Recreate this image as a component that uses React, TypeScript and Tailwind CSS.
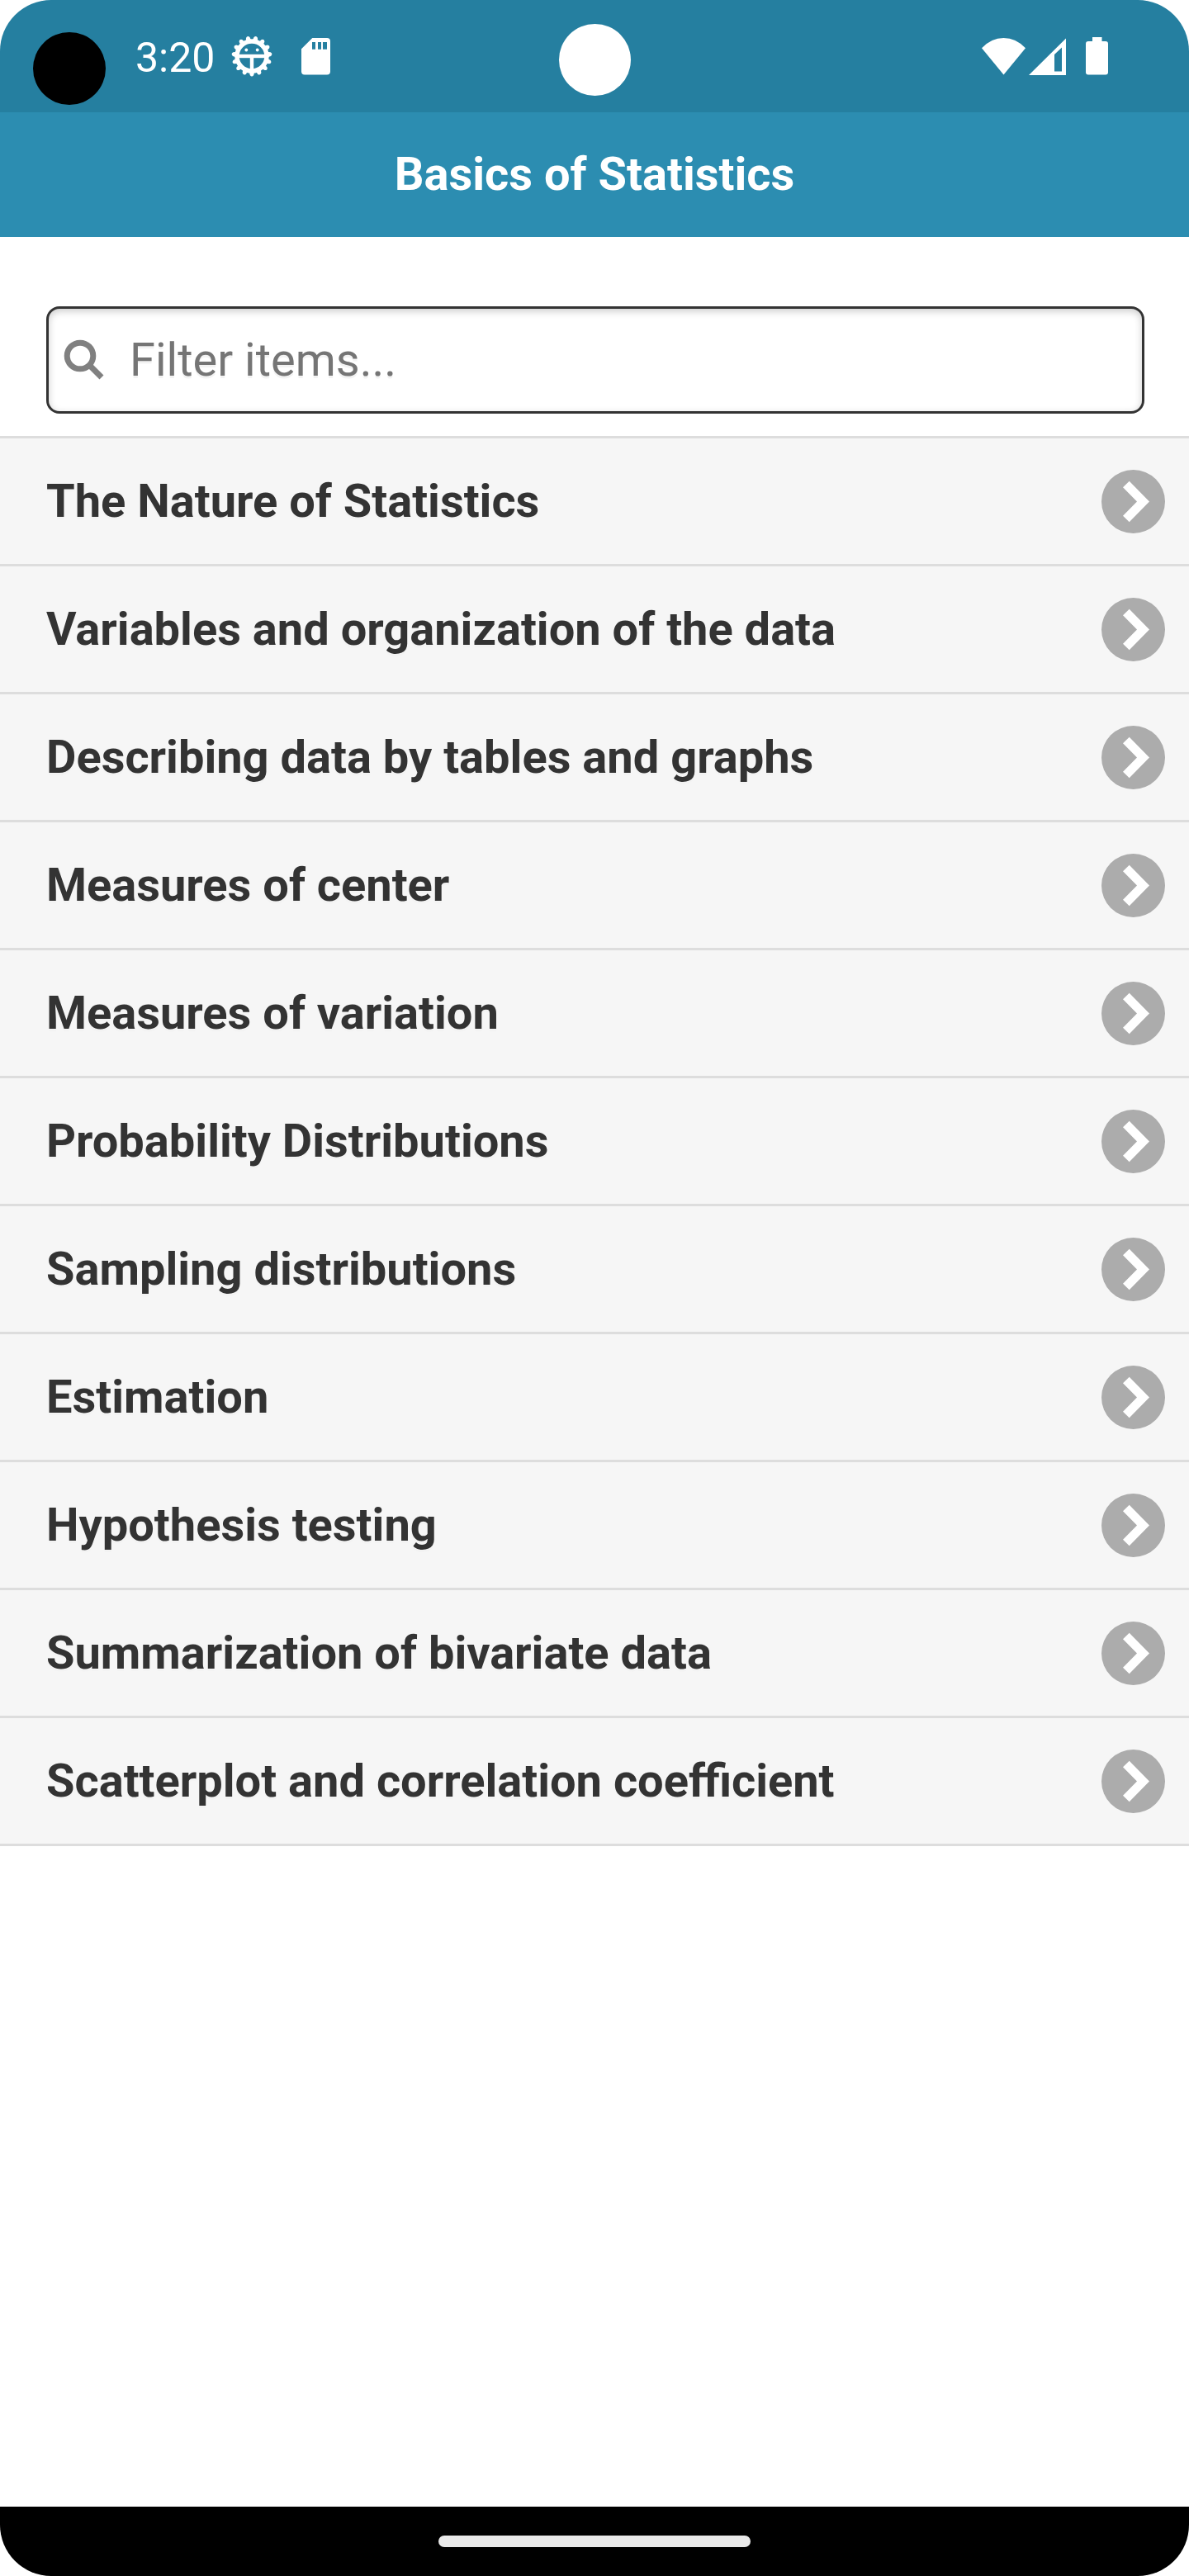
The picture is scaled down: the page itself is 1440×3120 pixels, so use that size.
import { useState } from "react";

const topics = [
  "The Nature of Statistics",
  "Variables and organization of the data",
  "Describing data by tables and graphs",
  "Measures of center",
  "Measures of variation",
  "Probability Distributions",
  "Sampling distributions",
  "Estimation",
  "Hypothesis testing",
  "Summarization of bivariate data",
  "Scatterplot and correlation coefficient",
];

const teeth = Array.from({ length: 15 }, (_, i) => i * 24);

function DebugIcon() {
  return (
    <svg className="size-[50px]" viewBox="-25 -25 50 50" fill="none" stroke="#fff" aria-hidden="true">
      <circle r="18" strokeWidth="5.4" />
      {teeth.map((deg) => (
        <path key={deg} d="M-4.4 18.5 L-2.8 20.5 L-2.3 23 Q0 26 2.3 23 L2.8 20.5 L4.4 18.5 Z" fill="#fff" stroke="none" transform={`rotate(${deg})`} />
      ))}
      <path d="M-16 0 H16" strokeWidth="4.4" />
      <path d="M0 0 V17" strokeWidth="4.4" />
      <circle cx="-6.7" cy="-7.5" r="1.9" fill="#fff" stroke="none" />
      <circle cx="6.7" cy="-7.5" r="1.9" fill="#fff" stroke="none" />
    </svg>
  );
}

function SdCardIcon() {
  return (
    <svg className="h-[45px] w-[35px]" viewBox="0 0 35 45" aria-hidden="true">
      <path
        fillRule="evenodd"
        fill="#fff"
        d="M13.3 0 H31 Q35 0 35 4 V40.500 Q35 44.500 31 44.500 H4 Q0 44.500 0 40.500 V13.300 Z M13 5 V13.700 H17 V5 Z M20 5 V13.700 H24 V5 Z M26 5 V13.700 H31 V5 Z"
      />
    </svg>
  );
}

function WifiIcon() {
  return (
    <svg className="h-[45px] w-[53px]" viewBox="0 0 53 45" aria-hidden="true">
      <path d="M0 12.300 Q11.500 0 26.500 0 Q41.500 0 53 12.300 L26.500 44.500 Z" fill="#fff" />
    </svg>
  );
}

function SignalIcon() {
  return (
    <svg className="h-[45px] w-[45px]" viewBox="0 0 45 45" aria-hidden="true">
      <path fillRule="evenodd" fill="#fff" d="M0 45 L45 0.500 V45 Z M31 20 V40.500 H40 V11.500 Z" />
    </svg>
  );
}

function BatteryIcon() {
  return (
    <svg className="h-[46px] w-[27px]" viewBox="0 0 27 46" aria-hidden="true">
      <path d="M8 0 H19.500 V5 H24 Q27 5 27 8 V42.500 Q27 45.500 24 45.500 H3 Q0 45.500 0 42.500 V8 Q0 5 3 5 H8 Z" fill="#fff" />
    </svg>
  );
}

function SearchIcon() {
  return (
    <svg className="size-[50px] shrink-0" viewBox="0 0 50 50" fill="none" stroke="#808080" strokeWidth="7" aria-hidden="true">
      <circle cx="20" cy="20" r="15.8" />
      <path d="M30.500 30.500 L46 46" />
    </svg>
  );
}

function ArrowIcon() {
  return (
    <svg className="size-[77px] shrink-0" viewBox="0 0 77 77" aria-hidden="true">
      <circle cx="38.500" cy="38.500" r="38.500" fill="#acacac" />
      <path d="M33.700 13.700 L26 21.300 L43 38.500 L26 55.700 L33.700 63.300 L58 38.500 Z" fill="#fff" />
    </svg>
  );
}

function StatusBar() {
  return (
    <div className="relative flex h-[136px] items-center justify-between bg-[#257fa0] pr-[98px] pl-[164px]">
      <span className="absolute top-[39px] left-10 size-[88px] rounded-full bg-black" />
      <span className="absolute inset-x-0 top-[29px] mx-auto size-[87px] rounded-full bg-white" />
      <div className="flex items-center">
        <span className="pt-1 text-[50px] leading-[64px] text-white">3:20</span>
        <div className="ml-5 flex items-center gap-[35px]">
          <DebugIcon />
          <SdCardIcon />
        </div>
      </div>
      <div className="flex items-center">
        <WifiIcon />
        <div className="ml-1 flex items-center gap-6">
          <SignalIcon />
          <BatteryIcon />
        </div>
      </div>
    </div>
  );
}

export default function App() {
  const [filter, setFilter] = useState("");
  const shown = topics.filter((t) => t.toLowerCase().includes(filter.toLowerCase()));

  return (
    <div className="flex min-h-screen flex-col overflow-hidden rounded-[62px] bg-white font-['Roboto',sans-serif] text-[56px] leading-[72px] text-[#333]">
      <StatusBar />
      <header className="bg-[#2c8db1] pt-[39px] pb-10 text-center text-white">
        <h1 className="font-bold">Basics of Statistics</h1>
      </header>

      <main className="grow pt-21">
        <label className="mr-[54px] ml-14 flex h-[130px] items-center gap-[30px] rounded-2xl border-3 border-[#333] pl-[18px] shadow-[inset_0_3px_10px_rgba(0,0,0,0.2)]">
          <SearchIcon />
          <input
            type="search"
            aria-label="Filter items"
            placeholder="Filter items..."
            value={filter}
            onChange={(e) => setFilter(e.target.value)}
            className="min-w-0 grow bg-transparent outline-none text-shadow-[0_3px_0_#f3f3f3] placeholder:text-[#757575]"
          />
        </label>

        <ul className="mt-[27px] border-b-3 border-[#ddd]">
          {shown.map((topic) => (
            <li key={topic} className="border-t-3 border-[#ddd]">
              <a
                href="#"
                className="flex items-center justify-between bg-[#f6f6f6] py-9 pr-[29px] pl-14 leading-[80px] font-bold text-shadow-[0_3px_0_#f3f3f3]"
              >
                <span>{topic}</span>
                <ArrowIcon />
              </a>
            </li>
          ))}
        </ul>
      </main>

      <footer className="flex h-[84px] items-center justify-center bg-black">
        <span className="h-[14px] w-[378px] rounded-full bg-[#e9e9e9]" />
      </footer>
    </div>
  );
}
